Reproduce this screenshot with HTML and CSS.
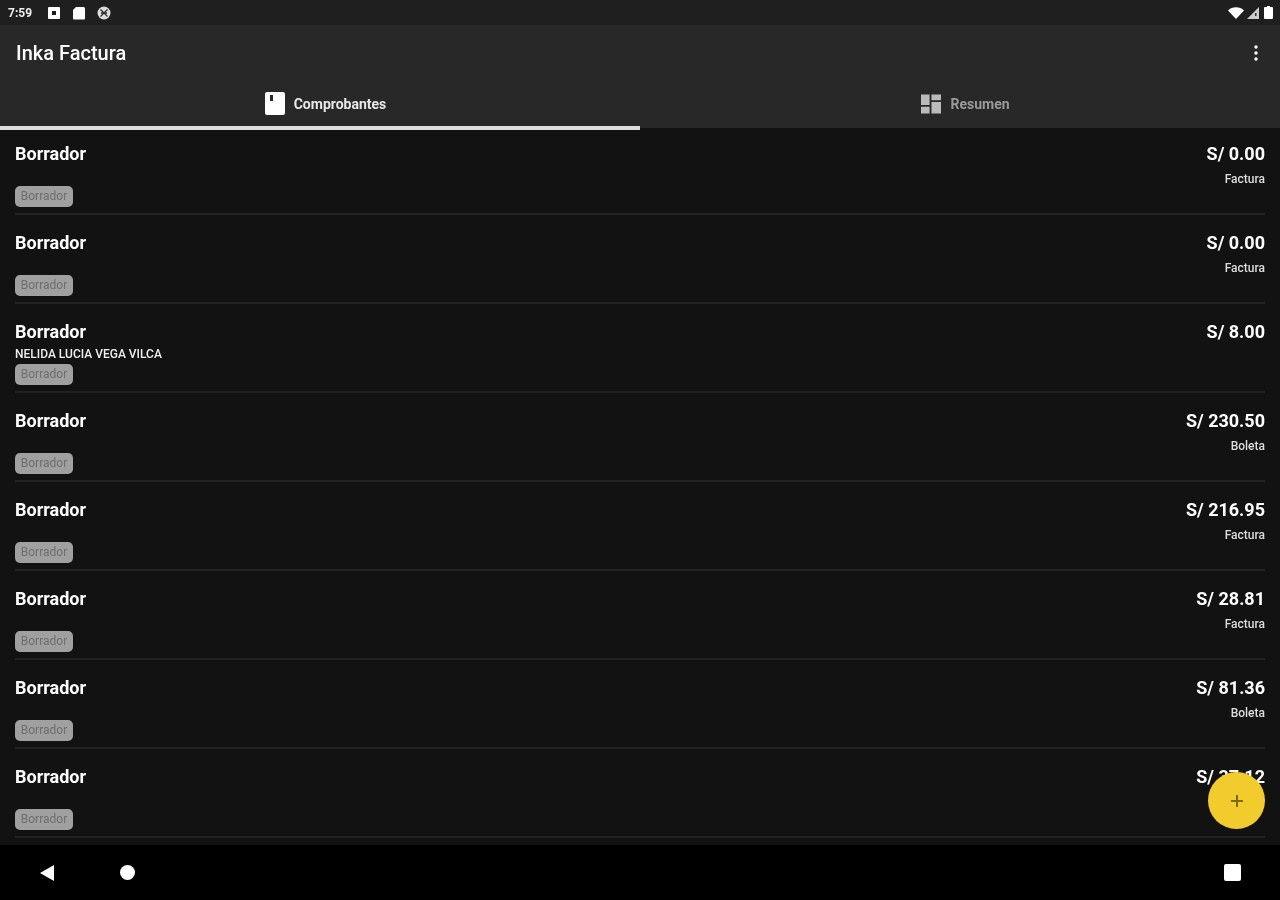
FILE: index.html
```html
<!DOCTYPE html>
<html lang="es">
<head>
<meta charset="utf-8">
<title>Inka Factura</title>
<link rel="stylesheet" href="styles.css">
</head>
<body>
<div class="screen">
  <div class="status">
    <div class="status-left">
      <span class="time">7:59</span>
      <svg class="sicon" viewBox="0 0 14 14"><path fill="#fff" fill-rule="evenodd" d="M2 1h10a1 1 0 0 1 1 1v10a1 1 0 0 1-1 1H2a1 1 0 0 1-1-1V2a1 1 0 0 1 1-1zm3 4v4h4V5z"/></svg>
      <svg class="sicon" viewBox="0 0 14 14"><path fill="#fff" d="M4 1h7.500A1.500 1.500 0 0 1 13 2.500v10a1 1 0 0 1-1 1H2a1 1 0 0 1-1-1V4z"/></svg>
      <svg class="sicon round" viewBox="0 0 14 14"><circle cx="7" cy="7" r="6.500" fill="#ddd"/><path stroke="#333" stroke-width="1.300" fill="none" d="M3.500 3.500l7 7M10.500 3.500l-7 7M4 7h6"/></svg>
    </div>
    <div class="status-right">
      <svg class="wifi" viewBox="0 0 16 12"><path fill="#fff" d="M0 3.500C4-.8 12-.8 16 3.500L8 12z"/></svg>
      <svg class="signal" viewBox="0 0 12 12"><path fill="#ccc" d="M12 0v12H0z"/><path fill="#333" d="M8 6h1.500v3H8z"/></svg>
      <svg class="battery" viewBox="0 0 9 13"><path fill="#fff" d="M3 0h3v1h2a1 1 0 0 1 1 1v10a1 1 0 0 1-1 1H1a1 1 0 0 1-1-1V2a1 1 0 0 1 1-1h2z"/></svg>
    </div>
  </div>
  <header class="appbar">
    <div class="toolbar">
      <h1 class="title">Inka Factura</h1>
      <svg class="more" viewBox="0 0 4 16"><circle cx="2" cy="2" r="1.700"/><circle cx="2" cy="8" r="1.700"/><circle cx="2" cy="14" r="1.700"/></svg>
    </div>
    <nav class="tabs">
      <div class="tab active">
        <svg class="tab-icon" viewBox="0 0 20 23"><path fill="#fff" fill-rule="evenodd" d="M2 0h16a2 2 0 0 1 2 2v19a2 2 0 0 1-2 2H2a2 2 0 0 1-2-2V2a2 2 0 0 1 2-2zm3 3v6h3V3z"/></svg>
        <span>Comprobantes</span>
      </div>
      <div class="tab">
        <svg class="tab-icon dim" viewBox="0 0 21 20"><path fill="#bbb" d="M0 0h9v11H0zM11 0h10v6H11zM0 13h9v7H0zM11 8h10v12H11z"/></svg>
        <span>Resumen</span>
      </div>
    </nav>
  </header>
  <main class="list">
    <div class="row"><div class="left"><div class="name">Borrador</div><div class="client"></div><span class="badge">Borrador</span></div><div class="right"><div class="amount">S/ 0.00</div><div class="kind">Factura</div></div></div>
    <div class="row"><div class="left"><div class="name">Borrador</div><div class="client"></div><span class="badge">Borrador</span></div><div class="right"><div class="amount">S/ 0.00</div><div class="kind">Factura</div></div></div>
    <div class="row"><div class="left"><div class="name">Borrador</div><div class="client">NELIDA LUCIA VEGA VILCA</div><span class="badge">Borrador</span></div><div class="right"><div class="amount">S/ 8.00</div><div class="kind"></div></div></div>
    <div class="row"><div class="left"><div class="name">Borrador</div><div class="client"></div><span class="badge">Borrador</span></div><div class="right"><div class="amount">S/ 230.50</div><div class="kind">Boleta</div></div></div>
    <div class="row"><div class="left"><div class="name">Borrador</div><div class="client"></div><span class="badge">Borrador</span></div><div class="right"><div class="amount">S/ 216.95</div><div class="kind">Factura</div></div></div>
    <div class="row"><div class="left"><div class="name">Borrador</div><div class="client"></div><span class="badge">Borrador</span></div><div class="right"><div class="amount">S/ 28.81</div><div class="kind">Factura</div></div></div>
    <div class="row"><div class="left"><div class="name">Borrador</div><div class="client"></div><span class="badge">Borrador</span></div><div class="right"><div class="amount">S/ 81.36</div><div class="kind">Boleta</div></div></div>
    <div class="row"><div class="left"><div class="name">Borrador</div><div class="client"></div><span class="badge">Borrador</span></div><div class="right"><div class="amount">S/ 37.12</div><div class="kind"></div></div></div>
  </main>
  <button class="fab" aria-label="Nuevo"><svg viewBox="0 0 14 14"><path d="M7 1v12M1 7h12" stroke="#7a6a1c" stroke-width="2" fill="none"/></svg></button>
  <footer class="navbar">
    <div class="nav-left">
      <svg class="nav-back" viewBox="0 0 16 16"><path fill="#fff" d="M15 0v16L1 8z"/></svg>
      <span class="nav-home"></span>
    </div>
    <span class="nav-recent"></span>
  </footer>
</div>
</body>
</html>
```
FILE: styles.css
```css
* { box-sizing: border-box; }
html, body { margin: 0; padding: 0; background: #121212; }
.screen {
  width: 1280px;
  height: 900px;
  display: flex;
  flex-direction: column;
  position: relative;
  overflow: hidden;
  font-family: Roboto, "Liberation Sans", sans-serif;
  color: #fff;
  filter: blur(0.6px);
}
.status {
  height: 25px;
  background: #1f1f1f;
  display: flex;
  justify-content: space-between;
  align-items: center;
  padding: 0 7px 0 8px;
}
.status-left, .status-right { display: flex; align-items: center; }
.status-left { gap: 11px; }
.time { font-size: 12px; font-weight: 700; width: 28px; color: #eee; }
.sicon { width: 14px; height: 14px; }
.status-right { gap: 2px; }
.wifi { width: 16px; height: 12px; }
.signal { width: 12px; height: 12px; margin-left: 1px; }
.battery { width: 9px; height: 13px; margin-left: 3px; }
.appbar { height: 103px; background: #282828; display: flex; flex-direction: column; position: relative; }
.toolbar {
  height: 56px;
  display: flex;
  justify-content: space-between;
  align-items: center;
  padding: 0 22px 0 16px;
}
.title { margin: 0; font-size: 20px; font-weight: 500; line-height: 56px; }
.more { width: 4px; height: 16px; fill: #fff; }
.tabs { flex: 1; display: flex; }
.tab {
  flex: 1;
  display: flex;
  justify-content: center;
  align-items: center;
  gap: 9px;
  font-size: 14px;
  font-weight: 700;
  color: #9a9a9a;
  padding: 0 0 2px 11px;
  position: relative;
}
.tab.active { color: #e8e8e8; }
.tab.active::after {
  content: "";
  position: absolute;
  left: 0; right: 0; bottom: -2px;
  height: 4px;
  background: #dcdcdc;
}
.tab-icon { width: 20px; height: 23px; }
.tab-icon.dim { height: 20px; }
.list { flex: 1; background: #121212; min-height: 0; }
.row {
  height: 89px;
  margin: 0 15px;
  padding-top: 17px;
  display: flex;
  justify-content: space-between;
  border-bottom: 2px solid #222;
}
.row:first-child { height: 87px; padding-top: 15px; }
.left { display: flex; flex-direction: column; align-items: flex-start; }
.name { font-size: 18px; font-weight: 700; line-height: 22px; }
.client { font-size: 12px; font-weight: 500; line-height: 14px; margin-top: 4px; height: 14px; color: #eee; }
.badge {
  margin-top: 3px;
  width: 58px;
  height: 21px;
  border-radius: 5px;
  background: #a0a0a0;
  color: #6e6e6e;
  font-size: 12px;
  line-height: 21px;
  text-align: center;
}
.right { display: flex; flex-direction: column; align-items: flex-end; }
.amount { font-size: 18px; font-weight: 700; line-height: 22px; }
.kind { font-size: 12px; font-weight: 500; line-height: 14px; margin-top: 7px; color: #ddd; }
.fab {
  position: absolute;
  left: 1208px;
  top: 772px;
  width: 57px;
  height: 57px;
  border: 0;
  border-radius: 50%;
  background: #f2cb2d;
  padding: 0;
  display: flex;
  align-items: center;
  justify-content: center;
}
.fab svg { width: 14px; height: 14px; }
.navbar {
  height: 55px;
  background: #000;
  display: flex;
  justify-content: space-between;
  align-items: center;
  padding: 0 39px;
}
.nav-left { display: flex; align-items: center; gap: 65px; }
.nav-back { width: 16px; height: 16px; }
.nav-home { width: 15px; height: 15px; border-radius: 50%; background: #fff; }
.nav-recent { width: 17px; height: 17px; border-radius: 2px; background: #fff; }
```
